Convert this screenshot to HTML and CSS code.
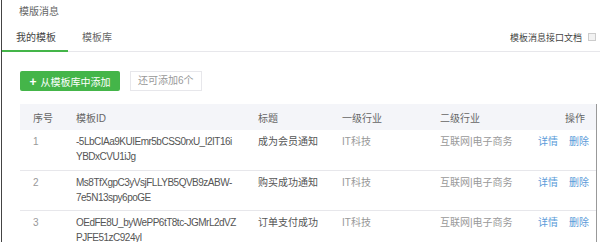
FILE: index.html
```html
<!DOCTYPE html>
<html lang="zh-CN">
<head>
    <meta charset="UTF-8">
    <title>模版消息</title>
    <link rel="stylesheet" href="styles.css">
</head>
<body>
    <div class="page">
        <div class="page-title">模版消息</div>

        <div class="tabs">
            <span class="tab active">我的模板</span>
            <span class="tab">模板库</span>
            <a class="doc-link">模板消息接口文档<i class="doc-icon"></i></a>
        </div>

        <div class="toolbar">
            <button class="btn-add"><span class="plus">+</span>从模板库中添加</button>
            <span class="quota">还可添加6个</span>
        </div>

        <div class="list">
            <table>
                <colgroup>
                    <col class="c-no">
                    <col class="c-id">
                    <col class="c-title">
                    <col class="c-ind1">
                    <col class="c-ind2">
                    <col>
                </colgroup>
                <thead>
                    <tr>
                        <th>序号</th>
                        <th>模板ID</th>
                        <th>标题</th>
                        <th>一级行业</th>
                        <th>二级行业</th>
                        <th class="ops">操作</th>
                    </tr>
                </thead>
                <tbody>
                    <tr>
                        <td class="muted">1</td>
                        <td class="tid">-5LbCIAa9KUIEmr5bCSS0rxU_I2IT16i<br>YBDxCVU1iJg</td>
                        <td class="name">成为会员通知</td>
                        <td class="muted">IT科技</td>
                        <td class="muted">互联网|电子商务</td>
                        <td class="ops"><a>详情</a><a>删除</a></td>
                    </tr>
                    <tr>
                        <td class="muted">2</td>
                        <td class="tid">Ms8TfXgpC3yVsjFLLYB5QVB9zABW-<br>7e5N13spy6poGE</td>
                        <td class="name">购买成功通知</td>
                        <td class="muted">IT科技</td>
                        <td class="muted">互联网|电子商务</td>
                        <td class="ops"><a>详情</a><a>删除</a></td>
                    </tr>
                    <tr>
                        <td class="muted">3</td>
                        <td class="tid">OEdFE8U_byWePP6tT8tc-JGMrL2dVZ<br>PJFE51zC924yI</td>
                        <td class="name">订单支付成功</td>
                        <td class="muted">IT科技</td>
                        <td class="muted">互联网|电子商务</td>
                        <td class="ops"><a>详情</a><a>删除</a></td>
                    </tr>
                </tbody>
            </table>
        </div>
    </div>
</body>
</html>
```

FILE: styles.css
```css
:root {
    --green: #44b549;
    --line: #e7e7eb;
    --text: #555;
    --muted: #999;
    --link: #5b9bd9;
}

* {
    box-sizing: border-box;
}

body {
    margin: 0;
    background: #fff;
    font-family: "Liberation Sans", "Noto Sans CJK SC", sans-serif;
    font-size: 10px;
    color: var(--text);
    overflow: hidden;
}

.page {
    height: 242px;
    margin-left: 1px;
    border-left: 1px solid #444;
}

.page-title {
    height: 24px;
    line-height: 24px;
    padding-left: 17px;
    color: #666;
}

.tabs {
    display: flex;
    align-items: flex-end;
    height: 28px;
    border-bottom: 1px solid var(--line);
}

.tab {
    height: 28px;
    line-height: 27px;
    padding: 0 13px 0 14px;
    margin-bottom: -1px;
    color: #666;
}

.tab.active {
    width: 66px;
    padding: 0 0 0 14px;
    color: #444;
    border-bottom: 2px solid var(--green);
}

.doc-link {
    display: flex;
    align-items: center;
    margin-left: auto;
    height: 28px;
    font-size: 9px;
    color: #444;
}

.doc-icon {
    width: 8px;
    height: 8px;
    margin: 0 4px 0 6px;
    border: 1px solid #ccc;
    background: #f2f2f2;
}

.toolbar {
    display: flex;
    align-items: center;
    gap: 10px;
    padding: 19px 0 0 18px;
}

.btn-add {
    width: 100px;
    height: 20px;
    border: none;
    border-radius: 2px;
    background: var(--green);
    color: #fff;
    font: inherit;
    padding: 0;
}

.plus {
    font-size: 12px;
    font-weight: bold;
    margin-right: 4px;
}

.quota {
    height: 20px;
    line-height: 18px;
    padding: 0 7px;
    border: 1px solid var(--line);
    color: var(--muted);
}

.list {
    margin: 13px 0 0 18px;
    width: 577px;
    border-right: 1px solid #999;
}

table {
    width: 100%;
    border-collapse: collapse;
    table-layout: fixed;
}

.c-no { width: 43px; }
.c-id { width: 182px; }
.c-title { width: 84px; }
.c-ind1 { width: 98px; }
.c-ind2 { width: 100px; }

th {
    height: 26px;
    padding: 0 0 0 13px;
    background: #f4f5f9;
    font-weight: normal;
    text-align: left;
    color: #666;
}

td {
    height: 40px;
    padding: 4px 0 0 13px;
    vertical-align: top;
    line-height: 15px;
    border-bottom: 1px solid var(--line);
    white-space: nowrap;
}

.tid {
    letter-spacing: -0.5px;
}

.name {
    color: #555;
}

.muted {
    color: var(--muted);
}

th.ops,
td.ops {
    text-align: right;
    padding-left: 0;
    padding-right: 11px;
}

.ops a {
    color: var(--link);
    margin-left: 11px;
}
```
